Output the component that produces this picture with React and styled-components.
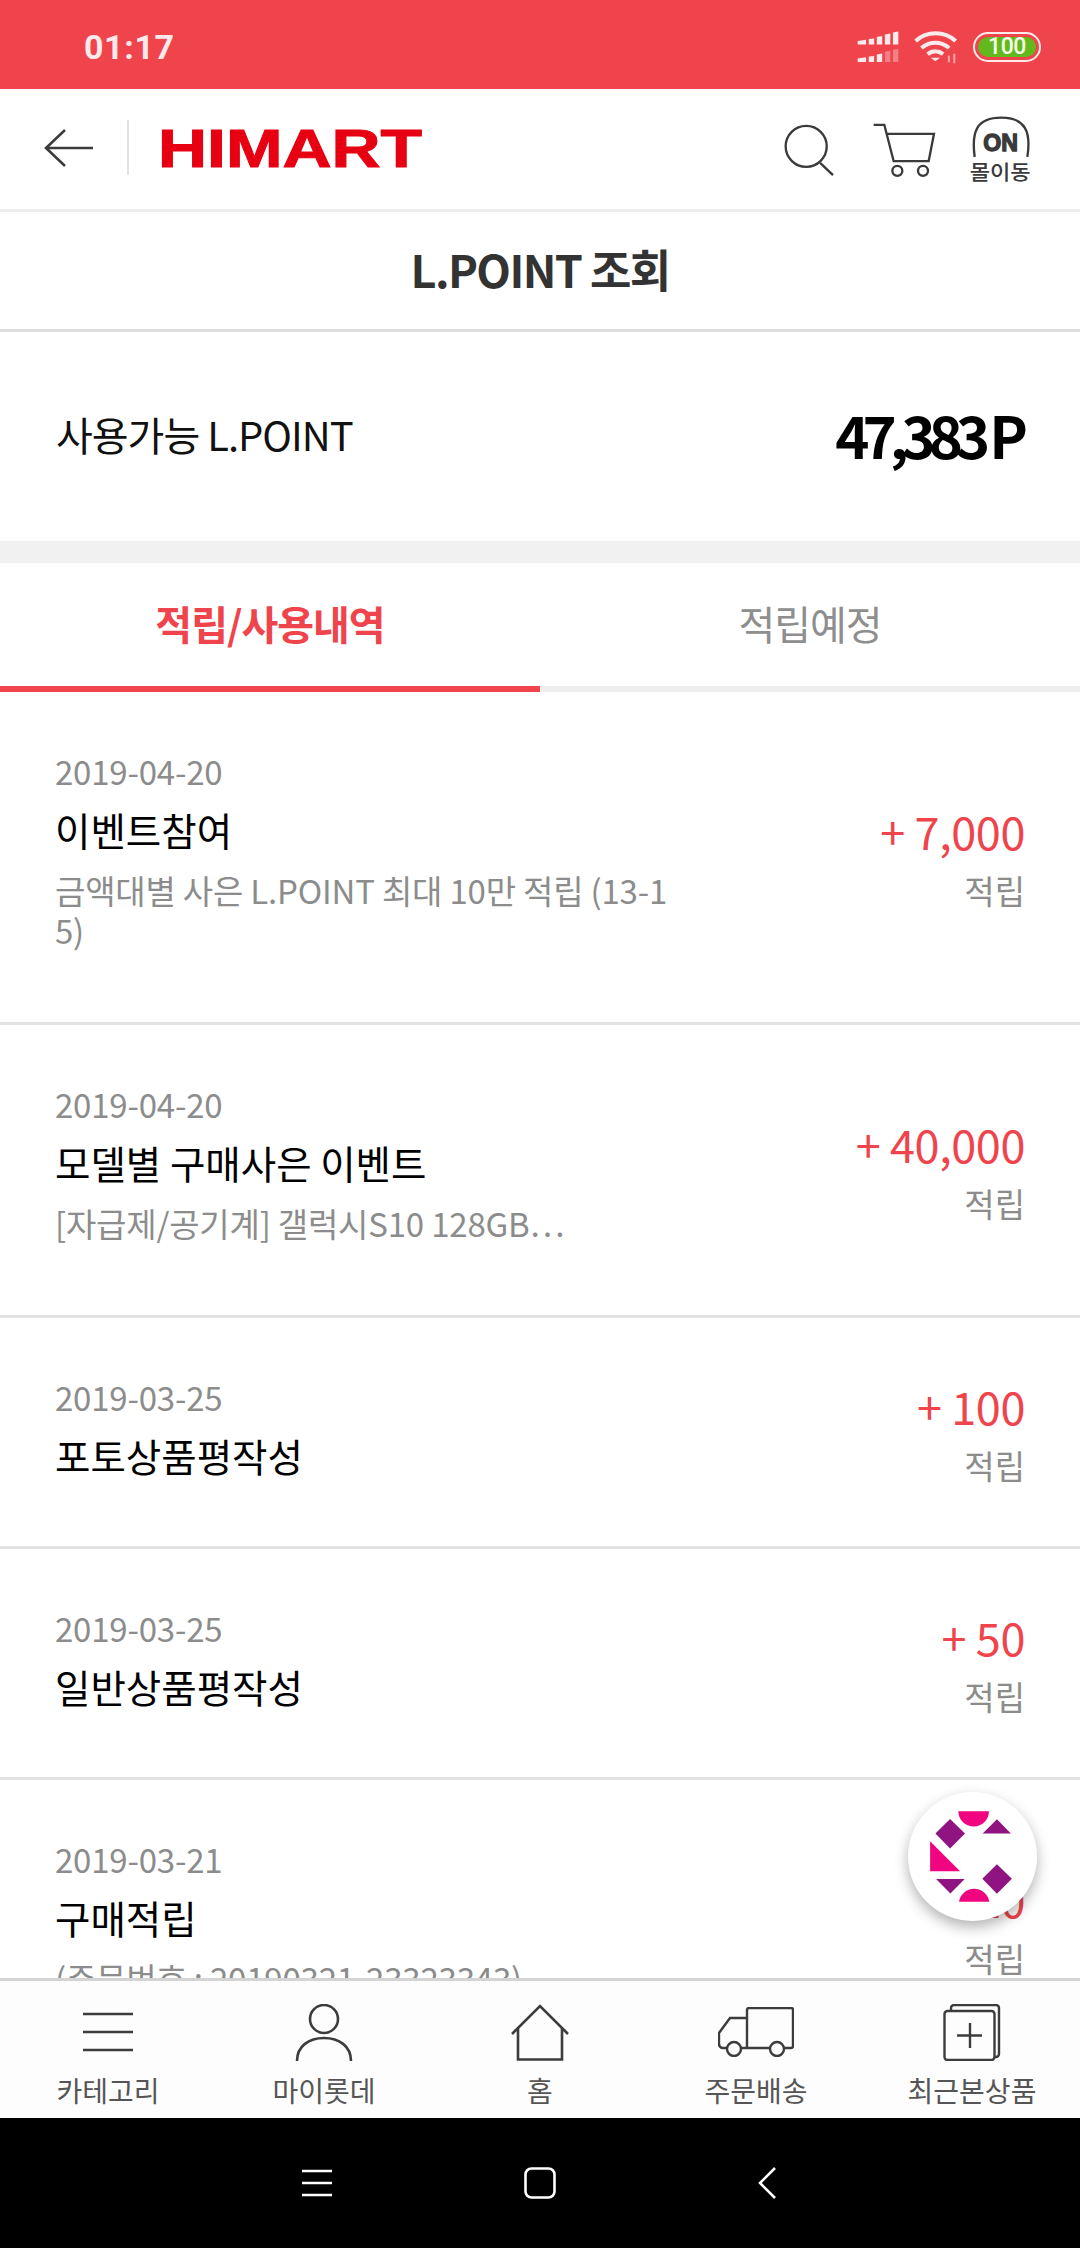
import React from "react";
import styled, { createGlobalStyle } from "styled-components";

const KR = `"Noto Sans CJK KR", "Noto Sans", sans-serif`;
const RED = "#ef444c";

const GlobalStyle = createGlobalStyle`
  html, body { margin: 0; padding: 0; background: #fff; }
  * { box-sizing: border-box; }
`;

const items = [
  { date: "2019-04-20", title: "이벤트참여", sub: "금액대별 사은 L.POINT 최대 10만 적립 (13-15)", amount: "+ 7,000" },
  { date: "2019-04-20", title: "모델별 구매사은 이벤트", sub: "[자급제/공기계] 갤럭시S10 128GB⋯", amount: "+ 40,000" },
  { date: "2019-03-25", title: "포토상품평작성", amount: "+ 100" },
  { date: "2019-03-25", title: "일반상품평작성", amount: "+ 50" },
  { date: "2019-03-21", title: "구매적립", sub: "(주문번호 : 20190321-23323343)", amount: "+ 20" },
];

function App() {
  return (
    <Page>
      <GlobalStyle />
      <StatusBar>
        <Clock>01:17</Clock>
        <StatusIcons>
          <SignalIcon />
          <WifiIcon />
          <Battery>
            <BatteryFill>100</BatteryFill>
          </Battery>
        </StatusIcons>
      </StatusBar>

      <Header>
        <HeaderLeft>
          <svg width="50" height="40" viewBox="0 0 50 40" fill="none" stroke="#3c3c3c" strokeWidth="2.6">
            <path d="M21 2 2 20l19 18M2 20h47" />
          </svg>
          <HeaderDivider />
          <svg width="266" height="62" viewBox="0 -10 266 62">
            <LogoText x="0" y="40" textLength="264" lengthAdjust="spacingAndGlyphs">HIMART</LogoText>
          </svg>
        </HeaderLeft>
        <HeaderRight>
          <SearchIcon width="53" height="55" viewBox="130 370 160 165" fill="none" stroke="#3a3a3a" strokeWidth="7">
            <circle cx="200" cy="440" r="62" />
            <path d="M242 490 281 527" />
          </SearchIcon>
          <svg width="65" height="57" viewBox="400 370 195 170" fill="none" stroke="#3a3a3a" strokeWidth="7">
            <path d="M405 378h32l28 109h105l16-82H443" />
            <circle cx="476" cy="516" r="15" />
            <circle cx="553" cy="516" r="15" />
          </svg>
          <svg width="65" height="72" viewBox="690 350 195 216" fill="none">
            <path d="M710 476c-10-76 5-118 80-118 72 0 90 42 78 118" stroke="#3a3a3a" strokeWidth="7" />
            <OnText x="736" y="458" textLength="104" lengthAdjust="spacingAndGlyphs">ON</OnText>
            <MoveText x="695" y="544" textLength="183" lengthAdjust="spacingAndGlyphs">몰이동</MoveText>
          </svg>
        </HeaderRight>
      </Header>

      <TitleBar>L.POINT 조회</TitleBar>

      <Summary>
        <SummaryLabel>사용가능 L.POINT</SummaryLabel>
        <SummaryValue>47,383 P</SummaryValue>
      </Summary>

      <Tabs>
        <Tab $active>적립/사용내역</Tab>
        <Tab>적립예정</Tab>
      </Tabs>

      <ListArea>
        {items.map((item, i) => (
          <Row key={i}>
            <RowLeft>
              <RowDate>{item.date}</RowDate>
              <RowTitle>{item.title}</RowTitle>
              {item.sub && <RowSub>{item.sub}</RowSub>}
            </RowLeft>
            <RowRight>
              <Amount>{item.amount}</Amount>
              <AmountType>적립</AmountType>
            </RowRight>
          </Row>
        ))}
        <Fab>
          <svg width="129" height="129" viewBox="145 95 385 388">
            <g fill="#f0047f">
              <path d="M295 153h92a46 46 0 0 1-92 0z" />
              <path d="M210 243l90 90h-90z" />
              <path d="M297 425a46 46 0 0 1 91 0z" />
            </g>
            <g fill="#8f1380">
              <path d="M368 220h85l-42-43z" />
              <path d="M270 176l45 44-45 45-44-45z" />
              <path d="M228 357h86l-43 43z" />
              <path d="M411 312l45 44-45 45-44-45z" />
            </g>
          </svg>
        </Fab>
      </ListArea>

      <BottomNav>
        <NavItem>
          <NavIcon>
            <svg width="50" height="42" viewBox="0 0 50 42" fill="none" stroke="#3c3c3c" strokeWidth="2.6">
              <path d="M0 3h50M0 21h50M0 39h50" />
            </svg>
          </NavIcon>
          <NavLabel>카테고리</NavLabel>
        </NavItem>
        <NavItem>
          <NavIcon>
            <svg width="58" height="57" viewBox="0 0 58 57" fill="none" stroke="#3c3c3c" strokeWidth="2.6">
              <circle cx="29" cy="15" r="14" />
              <path d="M2 57c0-15 12-23 27-23s27 8 27 23" />
            </svg>
          </NavIcon>
          <NavLabel>마이롯데</NavLabel>
        </NavItem>
        <NavItem>
          <NavIcon>
            <svg width="58" height="57" viewBox="0 0 58 57" fill="none" stroke="#3c3c3c" strokeWidth="2.6">
              <path d="M1 30 29 2l28 28M7 24v31.500h44V24" />
            </svg>
          </NavIcon>
          <NavLabel>홈</NavLabel>
        </NavItem>
        <NavItem>
          <NavIcon>
            <svg width="76" height="50" viewBox="0 0 76 50" fill="none" stroke="#3c3c3c" strokeWidth="2.4">
              <path d="M29 41V3a2 2 0 0 1 2-2h42a2 2 0 0 1 2 2v36a2 2 0 0 1-2 2h-7M52 41H23M9 41H5a4 4 0 0 1-4-4V26l11-15h17" />
              <circle cx="16" cy="42" r="7" />
              <circle cx="59" cy="42" r="7" />
            </svg>
          </NavIcon>
          <NavLabel>주문배송</NavLabel>
        </NavItem>
        <NavItem>
          <NavIcon>
            <svg width="58" height="57" viewBox="0 0 58 57" fill="none" stroke="#3c3c3c" strokeWidth="2.4">
              <rect x="1.500" y="7" width="50" height="49" rx="3" />
              <path d="M8 7V4a3 3 0 0 1 3-3h42a3 3 0 0 1 3 3v46a3 3 0 0 1-3 3h-1.500" />
              <path d="M27 19v25M14 31.500h25" />
            </svg>
          </NavIcon>
          <NavLabel>최근본상품</NavLabel>
        </NavItem>
      </BottomNav>

      <SystemBar>
        <SysSlot $gap={192}>
          <svg width="30" height="28" viewBox="0 0 30 28" fill="none" stroke="#fff" strokeWidth="2.6">
            <path d="M0 2h30M0 14h30M0 26h30" />
          </svg>
        </SysSlot>
        <SysSlot $gap={202}>
          <svg width="32" height="32" viewBox="0 0 32 32" fill="none" stroke="#fff" strokeWidth="2.6">
            <rect x="1.500" y="1.500" width="29" height="29" rx="6" />
          </svg>
        </SysSlot>
        <SysSlot>
          <svg width="18" height="32" viewBox="0 0 18 32" fill="none" stroke="#fff" strokeWidth="2.6">
            <path d="M17 1 2 16l15 15" />
          </svg>
        </SysSlot>
      </SystemBar>
    </Page>
  );
}

function SignalIcon() {
  const top = ["M357 126l25-4v14h-25z", "M390 120l16-2v18h-16z", "M414 114l16-3v25h-16z", "M438 106l16-3v33h-16z", "M462 100l16-3v39h-16z"];
  return (
    <svg width="42" height="32" viewBox="355 96 125 95" fill="#fdeaeb">
      {top.map((d, i) => (
        <path key={i} d={d} />
      ))}
      <g transform="translate(0 52)">
        {top.map((d, i) => (
          <path key={i} d={d} opacity={i < 3 ? 1 : 0.35} />
        ))}
      </g>
    </svg>
  );
}

function WifiIcon() {
  return (
    <svg width="44" height="34" viewBox="525 95 130 100" fill="none" stroke="#fdeaeb" strokeWidth="12">
      <path d="M530 127c34-30 84-30 118 0" />
      <path d="M547 148c24-21 58-21 82 0" />
      <path d="M565 166c14-11 32-11 46 0" />
      <path d="M574 177h28l-14 10z" fill="#fdeaeb" stroke="none" />
      <path d="M644 165v28M628 170v20" stroke="#f7a3a7" strokeWidth="6" />
    </svg>
  );
}

const Page = styled.div`
  width: 1080px;
  height: 2248px;
  display: flex;
  flex-direction: column;
  overflow: hidden;
  background: #fff;
  font-family: ${KR};
`;

const StatusBar = styled.div`
  height: 89px;
  flex: none;
  display: flex;
  align-items: center;
  justify-content: space-between;
  padding: 5px 39px 0 84px;
  background: ${RED};
`;

const Clock = styled.div`
  font-family: Roboto, sans-serif;
  font-weight: 700;
  font-size: 34px;
  letter-spacing: 0.6px;
  color: #fde9ea;
`;

const StatusIcons = styled.div`
  display: flex;
  align-items: center;
  gap: 15px;
`;

const Battery = styled.div`
  width: 68px;
  height: 30px;
  padding: 3px;
  border: 2.5px solid #fdeaeb;
  border-radius: 15px;
  display: flex;
`;

const BatteryFill = styled.div`
  flex: 1;
  border-radius: 10px;
  background: #62b81c;
  color: #f4fbe9;
  font-family: Roboto, sans-serif;
  font-weight: 500;
  font-size: 23px;
  line-height: 19px;
  letter-spacing: -0.4px;
  text-align: center;
`;

const Header = styled.div`
  height: 123px;
  flex: none;
  display: flex;
  align-items: center;
  justify-content: space-between;
  padding: 0 47px 3px 44px;
  border-bottom: 3px solid #eeeeee;
`;

const HeaderLeft = styled.div`
  display: flex;
  align-items: center;
`;

const HeaderDivider = styled.div`
  width: 2px;
  height: 55px;
  margin: 0 29px 0 33px;
  background: #e2e2e2;
`;

const LogoText = styled.text`
  font-family: "Liberation Sans", Arial, sans-serif;
  font-weight: 700;
  font-size: 54px;
  fill: #e60012;
  stroke: #e60012;
  stroke-width: 1px;
`;

const HeaderRight = styled.div`
  display: flex;
  align-items: center;
  gap: 31px;
  padding-top: 6px;
`;

const SearchIcon = styled.svg`
  margin-right: 5px;
`;

const OnText = styled.text`
  font-family: "Liberation Sans", Arial, sans-serif;
  font-weight: 700;
  font-size: 70px;
  fill: #3a3a3a;
  stroke: #3a3a3a;
  stroke-width: 4px;
`;

const MoveText = styled.text`
  font-family: ${KR};
  font-weight: 500;
  font-size: 62px;
  fill: #3a3a3a;
`;

const TitleBar = styled.div`
  height: 120px;
  flex: none;
  display: flex;
  align-items: center;
  justify-content: center;
  padding-bottom: 5px;
  border-bottom: 3px solid #dddddd;
  font-weight: 700;
  font-size: 45px;
  letter-spacing: -1.6px;
  color: #333;
`;

const Summary = styled.div`
  height: 209px;
  flex: none;
  display: flex;
  align-items: center;
  justify-content: space-between;
  padding: 0 59px 6px 56px;
`;

const SummaryLabel = styled.div`
  font-size: 40px;
  letter-spacing: -1px;
  color: #111;
`;

const SummaryValue = styled.div`
  font-weight: 700;
  font-size: 58px;
  letter-spacing: -7px;
  color: #000;
`;

const Tabs = styled.div`
  height: 151px;
  flex: none;
  display: flex;
  border-top: 22px solid #f1f1f1;
`;

const Tab = styled.div`
  flex: 1;
  display: flex;
  align-items: center;
  justify-content: center;
  padding-bottom: 4px;
  border-bottom: 6px solid ${(p) => (p.$active ? RED : "#eeeeee")};
  font-weight: ${(p) => (p.$active ? 700 : 400)};
  font-size: 40px;
  letter-spacing: -1px;
  color: ${(p) => (p.$active ? RED : "#8e8e8e")};
`;

const ListArea = styled.div`
  position: relative;
  flex: 1;
  min-height: 0;
  overflow: hidden;
`;

const Row = styled.div`
  display: flex;
  align-items: center;
  justify-content: space-between;
  padding: 57px 55px 56px 55px;
  border-bottom: 3px solid #e3e3e3;
`;

const RowLeft = styled.div`
  width: 622px;
`;

const RowDate = styled.div`
  font-size: 33px;
  line-height: 44px;
  letter-spacing: -0.2px;
  color: #8c8c8c;
`;

const RowTitle = styled.div`
  margin-top: 1px;
  font-size: 38.500px;
  line-height: 70px;
  color: #000;
`;

const RowSub = styled.div`
  margin: 6px 0 16px;
  font-size: 33px;
  line-height: 40px;
  letter-spacing: -0.2px;
  word-break: break-all;
  color: #8c8c8c;
`;

const RowRight = styled.div`
  display: flex;
  flex-direction: column;
  align-items: flex-end;
  margin: 1px 0 -4px;
`;

const Amount = styled.div`
  font-size: 45px;
  line-height: 57px;
  letter-spacing: -0.4px;
  color: ${RED};
`;

const AmountType = styled.div`
  margin-top: 3px;
  font-size: 33px;
  line-height: 57px;
  color: #8c8c8c;
`;

const Fab = styled.div`
  position: absolute;
  right: 43px;
  top: 1100px;
  width: 129px;
  height: 129px;
  border-radius: 50%;
  background: #fff;
  box-shadow: 0 6px 14px rgba(0, 0, 0, 0.3);
`;

const BottomNav = styled.div`
  height: 140px;
  flex: none;
  display: grid;
  grid-template-columns: repeat(5, 1fr);
  padding-top: 22px;
  border-top: 3px solid #d4d4d4;
  background: #fdfdfd;
`;

const NavItem = styled.div`
  display: flex;
  flex-direction: column;
  align-items: center;
`;

const NavIcon = styled.div`
  height: 58px;
  display: flex;
  align-items: center;
  justify-content: center;
`;

const NavLabel = styled.div`
  margin-top: 7px;
  font-size: 28px;
  line-height: 44px;
  color: #555;
`;

const SystemBar = styled.div`
  height: 130px;
  flex: none;
  display: flex;
  align-items: center;
  padding: 0 0 0 302px;
  background: #000;
`;

const SysSlot = styled.div`
  display: flex;
  margin-right: ${(p) => p.$gap || 0}px;
`;

export default App;
